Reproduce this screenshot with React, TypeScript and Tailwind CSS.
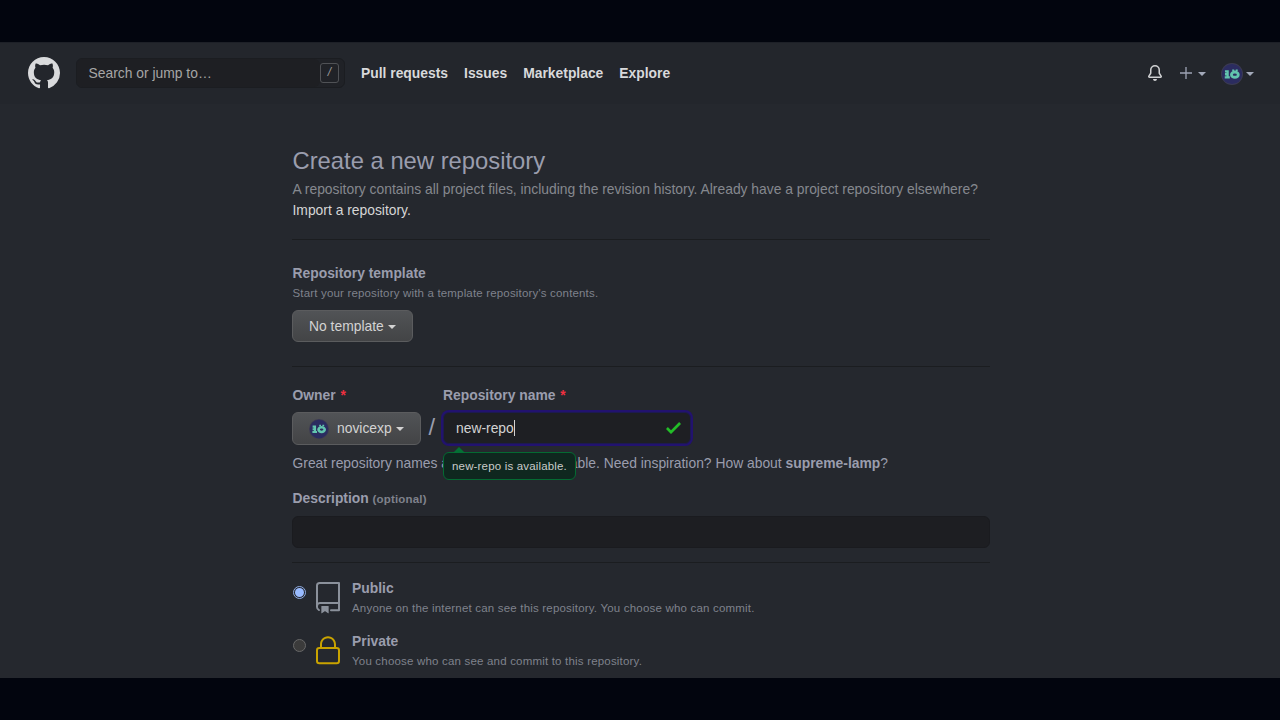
import React from "react";

function Caret({ className }: { className: string }) {
  return (
    <svg viewBox="0 0 8 4" className={`h-1 w-2 shrink-0 ${className}`} fill="currentColor">
      <path d="M0 0h8L4 4z" />
    </svg>
  );
}

function Avatar() {
  return (
    <svg viewBox="0 0 20 20" className="size-full" fill="none">
      <circle cx="10" cy="10" r="10" fill="#3c3b52" />
      <circle cx="10" cy="10" r="9.2" fill="#2b2c60" />
      <path d="M3.6 7.6h2.4v5.4M3.4 13h4.6M3.6 10.2h2.4" stroke="#62c4ae" strokeWidth="2.1" />
      <ellipse cx="12.6" cy="10.6" rx="3.1" ry="2.4" stroke="#62c4ae" strokeWidth="2.6" />
      <path d="M10.2 6.6h1.8M13.4 6.6h1.8" stroke="#62c4ae" strokeWidth="1.5" />
    </svg>
  );
}

function Header() {
  return (
    <header className="flex h-[62px] shrink-0 items-center border-t border-[#1d2027] bg-[#23262c] pb-[2px] pl-7 pr-[26px]">
      <svg viewBox="0 0 16 16" className="size-8 shrink-0" fill="#d9dadc">
        <path d="M8 0C3.58 0 0 3.58 0 8c0 3.54 2.29 6.53 5.47 7.59.4.07.55-.17.55-.38 0-.19-.01-.82-.01-1.49-2.01.37-2.53-.49-2.69-.94-.09-.23-.48-.94-.82-1.13-.28-.15-.68-.52-.01-.53.63-.01 1.08.58 1.23.82.72 1.21 1.87.87 2.33.66.07-.52.28-.87.51-1.07-1.78-.2-3.64-.89-3.64-3.95 0-.87.31-1.59.82-2.15-.08-.2-.36-1.02.08-2.12 0 0 .67-.21 2.2.82.64-.18 1.32-.27 2-.27.68 0 1.36.09 2 .27 1.53-1.04 2.2-.82 2.2-.82.44 1.1.16 1.92.08 2.12.51.56.82 1.27.82 2.15 0 3.07-1.87 3.75-3.65 3.95.29.25.54.73.54 1.48 0 1.07-.01 1.93-.01 2.2 0 .21.15.46.55.38A8.013 8.013 0 0016 8c0-4.42-3.58-8-8-8z" />
      </svg>
      <div className="ml-4 flex h-[30px] w-[269px] items-center rounded-md border border-[#1b1d21] bg-[#202227]">
        <div className="flex h-full w-[243px] items-center rounded-md bg-[#1e1f23] pl-[11.5px] pt-px text-[#a6a6a6]">Search or jump to…</div>
        <div className="flex h-5 w-[19px] items-center justify-center rounded-[3px] border border-[#505256] text-[12px] italic text-[#9b9b9b]">/</div>
      </div>
      <nav className="ml-4 flex gap-4 pt-px font-bold text-[#d8d9db]">
        <span>Pull requests</span>
        <span>Issues</span>
        <span>Marketplace</span>
        <span>Explore</span>
      </nav>
      <div className="ml-auto flex items-center">
        <svg viewBox="0 0 16 16" className="size-4" fill="#d0d1d3">
          <path d="M8 16a2 2 0 001.985-1.75c.017-.137-.097-.25-.235-.25h-3.5c-.138 0-.252.113-.235.25A2 2 0 008 16z" />
          <path
            fillRule="evenodd"
            d="M8 1.5A3.5 3.5 0 004.5 5v2.947c0 .346-.102.683-.294.97l-1.703 2.556.013.027h10.968l.013-.027-1.703-2.556a1.75 1.75 0 01-.294-.97V5A3.5 3.5 0 008 1.5zM3 5a5 5 0 0110 0v2.947c0 .05.015.098.042.139l1.703 2.555A1.518 1.518 0 0113.482 13H2.518a1.518 1.518 0 01-1.263-2.36l1.703-2.554A.25.25 0 003 7.947V5z"
          />
        </svg>
        <svg viewBox="0 0 12 12" className="ml-[17.5px] size-3" stroke="#9da3b4" strokeWidth="1.3">
          <path d="M6 0v12M0 6h12" />
        </svg>
        <Caret className="ml-1.5 mt-0.5 text-[#a3a9ba]" />
        <div className="ml-[15px] mt-0.5 size-[22px]">
          <Avatar />
        </div>
        <Caret className="ml-[3px] mt-0.5 text-[#a3a9ba]" />
      </div>
    </header>
  );
}

function Visibility({ checked, title, note, icon }: { checked?: boolean; title: string; note: string; icon: React.ReactNode }) {
  return (
    <div className="flex h-[53px] pl-[0.5px]">
      <span
        className={
          checked
            ? "mt-2 flex size-[13px] items-center justify-center rounded-full border border-[#8eaae0] bg-[#25282e]"
            : "mt-2 size-[13px] rounded-full border border-[#686868] bg-[#3b3b3b]"
        }
      >
        {checked && <span className="size-[9px] rounded-full bg-[#99bbff]" />}
      </span>
      <div className="ml-[6.5px] mt-1 size-8">{icon}</div>
      <div className="ml-2">
        <div className="font-bold leading-[21px]">{title}</div>
        <div className="text-[11.5px] leading-[18px] tracking-[0.19px] text-[#7f828c]">{note}</div>
      </div>
    </div>
  );
}

export default function App() {
  return (
    <div className="flex h-[720px] w-[1280px] flex-col overflow-hidden bg-[#02050e] py-[42px] font-['Liberation_Sans',Arial,sans-serif] text-[13.87px] leading-[21px] text-[#9a9dad]">
      <div className="flex h-[636px] flex-col overflow-hidden bg-[#25282e]">
        <Header />
        <main className="ml-[292px] w-[698px] whitespace-nowrap">
          <h1 className="mt-[39px] pl-[0.5px] text-[23.8px] leading-9">Create a new repository</h1>
          <p className="pl-[0.5px] text-[#85888f]">
            A repository contains all project files, including the revision history. Already have a project repository elsewhere?
          </p>
          <p className="pl-[0.5px] text-[#d6d6d6]">Import a repository.</p>
          <hr className="mt-[17.5px] border-[#1b1d20]" />

          <h2 className="mt-[23.5px] pl-[0.5px] font-bold">Repository template</h2>
          <p className="pl-[0.5px] text-[11.5px] leading-[18px] tracking-[0.17px] text-[#7f828c]">
            Start your repository with a template repository's contents.
          </p>
          <button className="mt-[8px] flex h-8 w-[120.5px] items-center rounded-md border border-[#5b5c5e] bg-linear-to-b from-[#515356] to-[#434446] pl-4 text-[#d3d3d3]">
            No template
            <Caret className="ml-[4px] mt-0.5" />
          </button>
          <hr className="mt-6 border-[#1b1d20]" />

          <div className="mt-[18px] flex pl-[0.5px]">
            <div className="w-[150.5px] font-bold">
              Owner <span className="ml-px text-[#f03040]">*</span>
            </div>
            <div className="font-bold">
              Repository name <span className="ml-px text-[#f03040]">*</span>
            </div>
          </div>
          <div className="mt-[6px] flex h-[33px] items-center">
            <button className="flex h-[33px] w-[128.5px] items-center rounded-md border border-[#5b5c5e] bg-linear-to-b from-[#515356] to-[#434446] pl-4 text-[#d3d3d3]">
              <span className="mr-2 size-5">
                <Avatar />
              </span>
              novicexp
              <Caret className="ml-[4px]" />
            </button>
            <span className="-mt-1 w-[22.5px] text-center text-[23.8px] leading-8">/</span>
            <div className="relative -mt-px flex h-8 w-[248px] items-center rounded-md border border-[#1d1a50] bg-[#1e1f23] pl-3 text-[#d3d3d3] shadow-[0_0_0_2px_#22126f]">
              new-repo
              <span className="h-4 w-px bg-[#d3d3d3]" />
              <svg viewBox="0 3.5 12 9.5" className="ml-auto mr-[9px] h-3 w-[15px]" fill="#23bd28">
                <path d="M12 5l-8 8-4-4 1.5-1.5L4 10l6.5-6.5L12 5z" />
              </svg>
              <div className="absolute -left-px top-[39px] h-7 w-[133px] rounded-md border border-[#046a32] bg-[#0f271f] text-center text-[11.5px] leading-[26px] tracking-[0.17px] text-[#c9cbca]">
                new-repo is available.
                <svg viewBox="0 0 12 6" className="absolute -top-[6px] left-[9px] h-1.5 w-3" fill="#047035">
                  <path d="M0 6L6 0l6 6z" />
                </svg>
              </div>
            </div>
          </div>
          <p className="mt-2 pl-[0.5px]">
            Great repository names are short and memorable. Need inspiration? How about <b>supreme-lamp</b>?
          </p>

          <div className="mt-[14px] pl-[0.5px] font-bold">
            Description <span className="text-[11.5px] tracking-[0.17px] text-[#7f828c]">(optional)</span>
          </div>
          <div className="mt-[5.5px] h-8 rounded-md border border-[#1a1b1f] bg-[#1d1e22]" />
          <hr className="mb-[15px] mt-[14.5px] border-[#1b1d20]" />

          <Visibility
            checked
            title="Public"
            note="Anyone on the internet can see this repository. You choose who can commit."
            icon={
              <svg viewBox="0 0 24 24" className="size-8" fill="#8b919b">
                <path
                  fillRule="evenodd"
                  d="M3 2.75A2.75 2.75 0 015.75 0h14.5a.75.75 0 01.75.75v20.5a.75.75 0 01-.75.75h-6a.75.75 0 010-1.5h5.25v-4H6A1.5 1.5 0 004.5 18v.75c0 .716.43 1.334 1.05 1.605a.75.75 0 01-.6 1.374A3.25 3.25 0 013 18.75v-16zM19.5 1.5V15H6c-.546 0-1.059.146-1.5.401V2.75c0-.69.56-1.25 1.25-1.25H19.5z"
                />
                <path d="M7 18.25a.25.25 0 01.25-.25h5a.25.25 0 01.25.25v5.01a.25.25 0 01-.397.201l-2.206-1.604a.25.25 0 00-.294 0L7.397 23.46a.25.25 0 01-.397-.2v-5.01z" />
              </svg>
            }
          />
          <Visibility
            title="Private"
            note="You choose who can see and commit to this repository."
            icon={
              <svg viewBox="0 0 24 24" className="size-8" fill="#c9a300">
                <path
                  fillRule="evenodd"
                  d="M6 9V7.25C6 3.845 8.503 1 12 1s6 2.845 6 6.25V9h.5a2.5 2.5 0 012.5 2.5v8a2.5 2.5 0 01-2.5 2.5h-13A2.5 2.5 0 013 19.5v-8A2.5 2.5 0 015.5 9H6zm1.5-1.75C7.5 4.58 9.422 2.5 12 2.5c2.578 0 4.5 2.08 4.5 4.75V9h-9V7.25zm-3 4.25a1 1 0 011-1h13a1 1 0 011 1v8a1 1 0 01-1 1h-13a1 1 0 01-1-1v-8z"
                />
              </svg>
            }
          />
        </main>
      </div>
    </div>
  );
}
